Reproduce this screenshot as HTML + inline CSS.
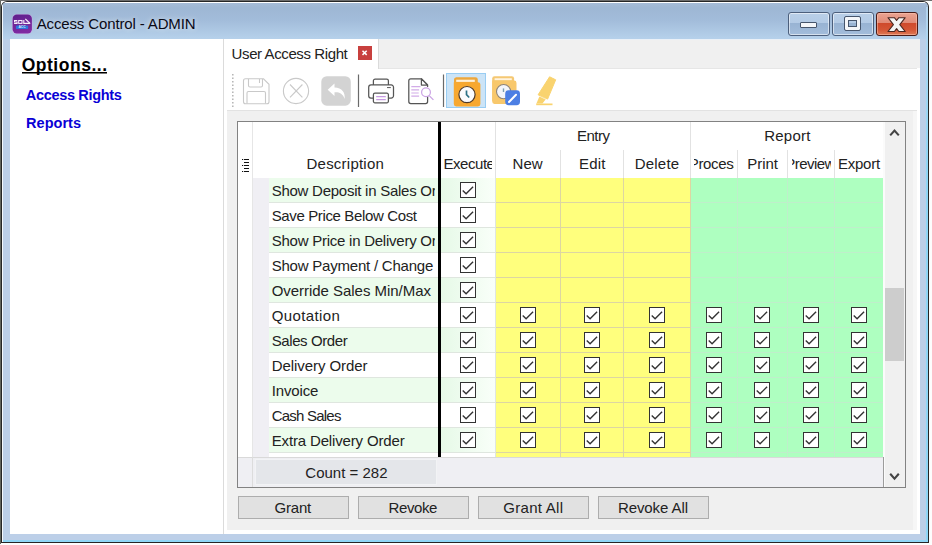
<!DOCTYPE html>
<html><head><meta charset="utf-8"><title>Access Control - ADMIN</title>
<style>
*{box-sizing:border-box;margin:0;padding:0}
html,body{width:932px;height:545px;overflow:hidden;background:#fdfdfd;font-family:"Liberation Sans",sans-serif;color:#1a1a1a}
.abs,.win *{position:absolute}
.win{position:absolute;left:0;top:0;width:932px;height:545px;overflow:hidden}
.s0{left:0;top:0;width:932px;height:1px;background:#6c6c6c}
.s1{left:0;top:1px;width:1px;height:543px;background:#62645c}
.bord{left:1px;top:1px;width:928px;height:542px;background:#262626;border-radius:6px 6px 0 0}
.frame{left:2px;top:2px;width:926px;height:540px;background:#bccfe8;border-radius:5px 5px 0 0;overflow:hidden}
.tb{left:0;top:0;right:0;height:37px;background:linear-gradient(#fff 0,#fff 1px,#a6bcd7 1px,#9eb7d4 6px,#a2bcda 18px,#b5d0ea 36px)}
.cy{left:1px;right:0;bottom:0;height:2px;background:#8fd6f6}
.cyr{right:0;top:5px;bottom:0;width:2px;background:linear-gradient(#b4d4ee,#a6d8f4 60px,#8fd6f6 160px)}
.wl{left:0;top:0;width:1px;bottom:0;background:#f4f8fc}
.title{left:36px;top:14px;font-size:15px;line-height:20px;color:#0a0a14;white-space:nowrap;letter-spacing:-0.11px}
.client{left:10px;top:39px;width:910px;height:495px;background:#fff}
.left{left:0;top:0;width:213px;height:495px;background:#fff}
.split{left:213px;top:0;width:1px;height:495px;background:#dbdbdb}
.opt{left:12px;top:15px;font-weight:bold;font-size:18px;line-height:22px;white-space:nowrap;color:#000;letter-spacing:-0.3px}
.opt i{left:0;right:0;top:18px;height:2px;background:#000}
.lnk{left:16px;font-weight:bold;font-size:14.5px;line-height:18px;color:#0a00d6;white-space:nowrap;letter-spacing:-0.3px}
.right{left:214px;top:0;width:696px;height:495px;background:#f0f0f0}
.rt{left:0;top:0;width:696px;height:1px;background:#eaf0f7}
.tab{left:0;top:0;width:155px;height:30px;background:#fff;border-right:1px solid #dadada;z-index:2}
.tab span{left:8px;top:5px;font-size:15px;line-height:20px;white-space:nowrap;letter-spacing:0;color:#1a1a1a}
.tabx{left:134px;top:7px;width:14px;height:14px;background:#c8403e}
.tool{left:0;top:29px;width:693px;height:42px;background:#fff;border-top:1px solid #e6e6e6}
.panel{left:3px;top:72px;width:690px;height:419px;background:#f0f0f0}
.pl{left:0;top:71px;width:693px;height:1px;background:#e2e2e2}
.rb0{right:3px;top:72px;width:4px;height:419px;background:#f6f6f6}
.rb1{right:0;top:29px;width:3px;height:466px;background:#fff}
.lb1{left:0;top:71px;width:3px;height:424px;background:#fff}
.bb1{left:214px;right:0;bottom:0;height:4px;background:#fff}
.grid{left:13px;top:82px;width:669px;height:367px;border:1px solid #828282;background:#fff;overflow:hidden}
.grid .c{border-right:0;}
.hdr{font-size:15px;line-height:20px;white-space:nowrap;overflow:hidden;text-align:center;letter-spacing:0;color:#1a1a1a}
.c.desc{overflow:hidden}
.c.desc span{left:3px;top:2px;font-size:15px;line-height:20px;white-space:nowrap;letter-spacing:0;color:#1a1a1a}
.c.ind{background:#f0eff4}
.cb{position:absolute}
.vl{width:1px;background:#e2e2e2}

.capb{border:1px solid #4c5f7c;border-radius:3px;background:linear-gradient(#b9cfe8 0,#b3cae5 46%,#98b3d3 47%,#a3bddb 100%);box-shadow:inset 0 0 0 1px rgba(255,255,255,.55)}
.capb b{background:#f4f6f9;border:1px solid #46556c;border-radius:1px}
.capb.red{border-color:#4a1c18;background:linear-gradient(#eaa392 0,#e08a76 46%,#cf4a2c 47%,#d45535 75%,#de7a55 100%);box-shadow:inset 0 0 0 1px rgba(255,200,180,.5)}
.ul{left:12px;top:33px;width:85px;height:2px;background:linear-gradient(#000 0,#000 50%,#777 50%,#777 100%)}
.clip{overflow:hidden;z-index:5}
.t{z-index:5}
.t{font-family:"Liberation Sans",sans-serif;white-space:nowrap;line-height:20px;font-size:15px;color:#222}
.tt{color:#0a0a16;text-shadow:0 0 5px rgba(255,255,255,.55),0 0 9px rgba(255,255,255,.35)}
.to{font-weight:bold;font-size:17.5px;color:#000}
.tl{font-weight:bold;font-size:14.5px;color:#0a00d6}

.btn{top:457px;width:111px;height:23px;background:#e1e1e1;border:1px solid #adadad;font-size:15px;line-height:21px;text-align:center;letter-spacing:0;color:#1a1a1a}
</style></head><body>
<div class="win">
 <div class="s0"></div><div class="s1"></div><div class="bord"></div>
 <div class="frame">
  <div class="tb"></div>
  <div class="wl"></div>
  <div class="cy"></div><div class="cyr"></div>
 </div>
 <!-- app icon -->
 <svg style="left:12px;top:14px" width="21" height="20" viewBox="0 0 21 20">
  <defs><linearGradient id="pg" x1="0" y1="0" x2="0.3" y2="1"><stop offset="0" stop-color="#5e1f8c"/><stop offset="1" stop-color="#7f2ba2"/></linearGradient></defs>
  <rect x="0.1" y="0.2" width="20.200" height="19.600" rx="4.600" fill="#d9b3ea" opacity="0.75"/>
  <rect x="0.600" y="0.600" width="19.300" height="18.800" rx="4.200" fill="url(#pg)"/>
  <path d="M5.300 6.500H2.500V7.900H5.100V9.400H2.100" fill="none" stroke="#f6eefb" stroke-width="1.050"/>
  <rect x="6.700" y="6.500" width="3.300" height="2.900" fill="none" stroke="#f6eefb" stroke-width="1.050"/>
  <path d="M11.800 6V9.400H17.800" fill="none" stroke="#f6eefb" stroke-width="1.100"/>
  <path d="M13.300 4.900L18.200 9.600" fill="none" stroke="#f6eefb" stroke-width="1.300"/>
  <rect x="3.900" y="11.400" width="12.300" height="3.700" rx="1.200" fill="#2f74da"/>
  <text x="10.050" y="14.350" font-size="3.300" font-weight="bold" text-anchor="middle" fill="#dfeaff" font-family="Liberation Sans, sans-serif">ACC</text>
 </svg>
 <!-- caption buttons -->
 <div class="capb" style="left:788px;top:12px;width:42px;height:24px"><i class="g1"></i><b style="left:11px;top:9px;width:17px;height:6px"></b></div>
 <div class="capb" style="left:832px;top:12px;width:42px;height:24px"><i class="g1"></i><b style="left:12px;top:4px;width:15px;height:13px;background:transparent;border:3px solid #f4f6f9;outline:1px solid #46556c;box-shadow:inset 0 0 0 1px #46556c"></b></div>
 <div class="capb red" style="left:876px;top:12px;width:42px;height:24px"><i class="g1"></i>
  <svg style="left:9px;top:3px" width="22" height="18" viewBox="0 0 22 18"><path d="M2.00 1.70 L8.40 1.70 L10.60 4.51 L12.80 1.70 L19.20 1.70 L13.80 8.60 L19.20 15.50 L12.80 15.50 L10.60 12.69 L8.40 15.50 L2.00 15.50 L7.40 8.60z" fill="#f4f4f4" stroke="#4a2620" stroke-width="1.1" stroke-linejoin="round"/></svg>
 </div>

 <div class="client">
  <div class="left">
   <div class="ul"></div>
  </div>
  <div class="split"></div>
  <div class="right">
   <div class="rt"></div><div class="tab">
    <div class="tabx"><svg style="left:0;top:0" width="14" height="14" viewBox="0 0 14 14"><path d="M4.500 4.700l4.200 4.200M8.700 4.700l-4.200 4.200" stroke="#fff" stroke-width="1.500"/></svg></div>
   </div>
   <div class="tool" id="tool"><svg style="left:0;top:0" width="693" height="41" viewBox="224 69 693 41">
 <!-- grip -->
 <path d="M232.800 74v34" stroke="#b4b4b4" stroke-width="1.500" stroke-dasharray="1.500 2"/>
 <!-- save (disabled) -->
 <g fill="none" stroke="#c9c9c9" stroke-width="1.1">
  <path d="M245.5 78.8h18l5.5 5.5v17.4a2 2 0 0 1-2 2h-21.5a2 2 0 0 1-2-2V80.8a2 2 0 0 1 2-2z"/>
  <path d="M248.5 79v6.5a1.5 1.5 0 0 0 1.500 1.500h11a1.500 1.500 0 0 0 1.500-1.500V79"/>
  <path d="M259.500 79v4"/>
  <path d="M247 103.500V93a1.500 1.500 0 0 1 1.500-1.500h15.500a1.500 1.500 0 0 1 1.500 1.500v10.500"/>
 </g>
 <!-- cancel (disabled) -->
 <g fill="none" stroke="#c9c9c9" stroke-width="1.1">
  <circle cx="296" cy="91" r="12.600"/>
  <path d="M290 84.500l12.400 12.800M302.400 84.500L290 97.300"/>
 </g>
 <!-- undo (disabled) -->
 <rect x="321.300" y="76.200" width="29.500" height="29.500" rx="5.500" fill="#d3d3d3"/>
 <path d="M334.500 83.500l-6.800 6.300 6.800 6.300v-3.900c4.800-0.300 8.300 1.300 10.200 6.800 0.600-6.800-2.600-11.200-10.200-11.600z" fill="#fff"/>
 <!-- separators -->
 <path d="M358.500 74.500v32.500M443.500 74.500v32.500" stroke="#6a6a6a" stroke-width="1.200"/>
 <!-- printer -->
 <g fill="none" stroke="#555" stroke-width="1.250" stroke-linejoin="round">
  <path d="M373.400 85v-4.200a1.700 1.700 0 0 1 1.700-1.700h11.600a1.700 1.700 0 0 1 1.700 1.700v4.200"/>
  <path d="M373.400 98h-2.400a2.300 2.300 0 0 1-2.300-2.300v-8.400a2.300 2.300 0 0 1 2.300-2.300h20.200a2.300 2.300 0 0 1 2.300 2.300v8.400a2.300 2.300 0 0 1-2.300 2.300h-2.400"/>
  <path d="M374.900 93.200h12a1.500 1.500 0 0 1 1.500 1.500v6.600a1.500 1.500 0 0 1-1.500 1.500h-12a1.500 1.500 0 0 1-1.500-1.500v-6.600a1.500 1.500 0 0 1 1.500-1.500z" fill="#fff"/>
  <path d="M387 87.600h3.800" stroke-width="1"/>
 </g>
 <path d="M376.200 96.600h9.600M376.200 99.600h9.600" stroke="#c79be2" stroke-width="1.100"/>
 <!-- doc preview -->
 <g fill="none" stroke="#555" stroke-width="1.250" stroke-linejoin="round">
  <path d="M427.600 96v5.600a2 2 0 0 1-2 2h-14.800a2 2 0 0 1-2-2v-20.800a2 2 0 0 1 2-2h10.600l6.200 6.200v2"/>
  <path d="M421.400 78.900v6.100h6.100z" fill="#fff"/>
 </g>
 <path d="M411.300 86.600h9.200M411.300 89.800h7.800M411.300 93h7.400M411.300 96.200h7.800" stroke="#d2abe8" stroke-width="1.200"/>
 <circle cx="426" cy="92.300" r="4.400" fill="#fff" stroke="#caa2e4" stroke-width="1.200"/>
 <path d="M429.200 95.600l4.200 4.300" stroke="#caa2e4" stroke-width="1.300"/>
 <!-- selected folder-clock -->
 <rect x="446.500" y="73.500" width="39" height="34" fill="#cce4f7" stroke="#99cdf3"/>
 <path d="M456.200 77.200h19.200a2.400 2.400 0 0 1 2.400 2.400V104h-23.800V79.600a2.400 2.400 0 0 1 2.200-2.400z" fill="#eda73c"/>
 <path d="M453.800 82.200h24.200a2.400 2.400 0 0 1 2.400 2.400v19.500a2.400 2.400 0 0 1-2.400 2.400h-21.800a2.400 2.400 0 0 1-2.400-2.400z" fill="#f7a830"/>
 <path d="M456.200 80.800h18.600" stroke="#fff1d9" stroke-width="2.200"/>
 <circle cx="467" cy="94.600" r="8.100" fill="#fbfbfd" stroke="#4e3a2a" stroke-width="1.200"/>
 <path d="M466.500 90.600v4.100l2.700 2.800" fill="none" stroke="#2d7186" stroke-width="1.700"/>
 <!-- folder-clock-edit -->
 <path d="M494.500 76.200h17.300a2.300 2.300 0 0 1 2.300 2.300V101h-21.900V78.500a2.300 2.300 0 0 1 2.300-2.300z" fill="#f5c873"/>
 <path d="M492.200 80.600h22a2.300 2.300 0 0 1 2.300 2.300v18.700a2.300 2.300 0 0 1-2.300 2.300h-19.700a2.300 2.300 0 0 1-2.300-2.300z" fill="#f8c86c"/>
 <path d="M494.600 79.200h17.200" stroke="#fff4e0" stroke-width="1.900"/>
 <circle cx="503.600" cy="91.600" r="7.100" fill="#f4f6fa" stroke="#8d8378" stroke-width="1.100"/>
 <path d="M503.500 88.400v3.600" fill="none" stroke="#7c9fb0" stroke-width="1.400"/>
 <rect x="505.200" y="90.300" width="14.800" height="14.900" rx="3.400" fill="#4c7fe4"/>
 <path d="M509 102l7-7.200" stroke="#fff" stroke-width="2" stroke-linecap="round"/>
 <!-- highlighter -->
 <g fill="#f9d36f">
  <path d="M549.600 76.800l6.100 3-8.100 19.300-9.500-4.300z" stroke="#f9d36f" stroke-width="1" stroke-linejoin="round"/>
  <path d="M539.400 96.500l6.200 3.100-3.200 3.900-6 0.100z"/>
  <rect x="536.200" y="103.500" width="16.300" height="1.700"/>
 </g>
 <path d="M540.300 96.600l5.600 2.700" stroke="#fbe2a0" stroke-width="0.700" fill="none"/>
</svg>
</div>
   <div class="pl"></div><div class="panel"></div><div class="lb1"></div>
   <div class="grid" id="grid">
<div style="left:0;top:0;width:14px;height:335px;background:#fff"></div>
<div class="vl" style="left:14px;top:0;height:335px;background:#e6e6e6"></div>
<svg style="left:4px;top:36px" width="8" height="15" viewBox="0 0 8 15"><path d="M2 1.500h5M2 4.500h5M2 7.500h5M2 10.500h5M2 13.500h5" stroke="#111" stroke-width="1.150"/><path d="M0 1.500h1.200M0 7.500h1.200M0 13.500h1.200" stroke="#111" stroke-width="1.200"/></svg>
<div class="vl" style="left:257px;top:0px;height:56px"></div>
<div class="vl" style="left:322px;top:28px;height:28px"></div>
<div class="vl" style="left:385px;top:28px;height:28px"></div>
<div class="vl" style="left:452px;top:0px;height:56px"></div>
<div class="vl" style="left:499px;top:28px;height:28px"></div>
<div class="vl" style="left:549px;top:28px;height:28px"></div>
<div class="vl" style="left:596px;top:28px;height:28px"></div>
<div class="c ind" style="left:15px;top:56px;width:16px;height:25px"></div>
<div class="c" style="left:31px;top:56px;width:169px;height:24px;background:#ecfcec"></div>
<div style="left:31px;top:80px;width:169px;height:1px;background:#dfe6df"></div>
<div class="c" style="left:203px;top:56px;width:55px;height:25px;background:linear-gradient(90deg,#e6f9e7,#f9fff9);border-right:1px solid #dfe6df;border-bottom:1px solid #dfe6df"></div>
<svg class="cb" style="left:222px;top:60px" width="16" height="16" viewBox="0 0 16 16"><rect x="0.5" y="0.5" width="15" height="15" fill="#fff" stroke="#333"/><path d="M2.7 8.4 L6.1 11.8 L13.1 4.8" fill="none" stroke="#333" stroke-width="1.35"/></svg>
<div class="c" style="left:258px;top:56px;width:65px;height:25px;background:#ffff7d;border-right:1px solid #ddd6a2;border-bottom:1px solid #ddd6a2"></div>
<div class="c" style="left:323px;top:56px;width:63px;height:25px;background:#ffff7d;border-right:1px solid #ddd6a2;border-bottom:1px solid #ddd6a2"></div>
<div class="c" style="left:386px;top:56px;width:67px;height:25px;background:#ffff7d;border-right:1px solid #ddd6a2;border-bottom:1px solid #ddd6a2"></div>
<div class="c" style="left:453px;top:56px;width:47px;height:25px;background:#aeffc0;border-right:1px solid #bfeecb;border-bottom:1px solid #bfeecb"></div>
<div class="c" style="left:500px;top:56px;width:50px;height:25px;background:#aeffc0;border-right:1px solid #bfeecb;border-bottom:1px solid #bfeecb"></div>
<div class="c" style="left:550px;top:56px;width:47px;height:25px;background:#aeffc0;border-right:1px solid #bfeecb;border-bottom:1px solid #bfeecb"></div>
<div class="c" style="left:597px;top:56px;width:49px;height:25px;background:#aeffc0;border-right:1px solid #bfeecb;border-bottom:1px solid #bfeecb"></div>
<div class="c ind" style="left:15px;top:81px;width:16px;height:25px"></div>
<div class="c" style="left:31px;top:81px;width:169px;height:24px;background:#ffffff"></div>
<div style="left:31px;top:105px;width:169px;height:1px;background:#dfe6df"></div>
<div class="c" style="left:203px;top:81px;width:55px;height:25px;background:#ffffff;border-right:1px solid #dfe6df;border-bottom:1px solid #dfe6df"></div>
<svg class="cb" style="left:222px;top:85px" width="16" height="16" viewBox="0 0 16 16"><rect x="0.5" y="0.5" width="15" height="15" fill="#fff" stroke="#333"/><path d="M2.7 8.4 L6.1 11.8 L13.1 4.8" fill="none" stroke="#333" stroke-width="1.35"/></svg>
<div class="c" style="left:258px;top:81px;width:65px;height:25px;background:#ffff7d;border-right:1px solid #ddd6a2;border-bottom:1px solid #ddd6a2"></div>
<div class="c" style="left:323px;top:81px;width:63px;height:25px;background:#ffff7d;border-right:1px solid #ddd6a2;border-bottom:1px solid #ddd6a2"></div>
<div class="c" style="left:386px;top:81px;width:67px;height:25px;background:#ffff7d;border-right:1px solid #ddd6a2;border-bottom:1px solid #ddd6a2"></div>
<div class="c" style="left:453px;top:81px;width:47px;height:25px;background:#aeffc0;border-right:1px solid #bfeecb;border-bottom:1px solid #bfeecb"></div>
<div class="c" style="left:500px;top:81px;width:50px;height:25px;background:#aeffc0;border-right:1px solid #bfeecb;border-bottom:1px solid #bfeecb"></div>
<div class="c" style="left:550px;top:81px;width:47px;height:25px;background:#aeffc0;border-right:1px solid #bfeecb;border-bottom:1px solid #bfeecb"></div>
<div class="c" style="left:597px;top:81px;width:49px;height:25px;background:#aeffc0;border-right:1px solid #bfeecb;border-bottom:1px solid #bfeecb"></div>
<div class="c ind" style="left:15px;top:106px;width:16px;height:25px"></div>
<div class="c" style="left:31px;top:106px;width:169px;height:24px;background:#ecfcec"></div>
<div style="left:31px;top:130px;width:169px;height:1px;background:#dfe6df"></div>
<div class="c" style="left:203px;top:106px;width:55px;height:25px;background:linear-gradient(90deg,#e6f9e7,#f9fff9);border-right:1px solid #dfe6df;border-bottom:1px solid #dfe6df"></div>
<svg class="cb" style="left:222px;top:110px" width="16" height="16" viewBox="0 0 16 16"><rect x="0.5" y="0.5" width="15" height="15" fill="#fff" stroke="#333"/><path d="M2.7 8.4 L6.1 11.8 L13.1 4.8" fill="none" stroke="#333" stroke-width="1.35"/></svg>
<div class="c" style="left:258px;top:106px;width:65px;height:25px;background:#ffff7d;border-right:1px solid #ddd6a2;border-bottom:1px solid #ddd6a2"></div>
<div class="c" style="left:323px;top:106px;width:63px;height:25px;background:#ffff7d;border-right:1px solid #ddd6a2;border-bottom:1px solid #ddd6a2"></div>
<div class="c" style="left:386px;top:106px;width:67px;height:25px;background:#ffff7d;border-right:1px solid #ddd6a2;border-bottom:1px solid #ddd6a2"></div>
<div class="c" style="left:453px;top:106px;width:47px;height:25px;background:#aeffc0;border-right:1px solid #bfeecb;border-bottom:1px solid #bfeecb"></div>
<div class="c" style="left:500px;top:106px;width:50px;height:25px;background:#aeffc0;border-right:1px solid #bfeecb;border-bottom:1px solid #bfeecb"></div>
<div class="c" style="left:550px;top:106px;width:47px;height:25px;background:#aeffc0;border-right:1px solid #bfeecb;border-bottom:1px solid #bfeecb"></div>
<div class="c" style="left:597px;top:106px;width:49px;height:25px;background:#aeffc0;border-right:1px solid #bfeecb;border-bottom:1px solid #bfeecb"></div>
<div class="c ind" style="left:15px;top:131px;width:16px;height:25px"></div>
<div class="c" style="left:31px;top:131px;width:169px;height:24px;background:#ffffff"></div>
<div style="left:31px;top:155px;width:169px;height:1px;background:#dfe6df"></div>
<div class="c" style="left:203px;top:131px;width:55px;height:25px;background:#ffffff;border-right:1px solid #dfe6df;border-bottom:1px solid #dfe6df"></div>
<svg class="cb" style="left:222px;top:135px" width="16" height="16" viewBox="0 0 16 16"><rect x="0.5" y="0.5" width="15" height="15" fill="#fff" stroke="#333"/><path d="M2.7 8.4 L6.1 11.8 L13.1 4.8" fill="none" stroke="#333" stroke-width="1.35"/></svg>
<div class="c" style="left:258px;top:131px;width:65px;height:25px;background:#ffff7d;border-right:1px solid #ddd6a2;border-bottom:1px solid #ddd6a2"></div>
<div class="c" style="left:323px;top:131px;width:63px;height:25px;background:#ffff7d;border-right:1px solid #ddd6a2;border-bottom:1px solid #ddd6a2"></div>
<div class="c" style="left:386px;top:131px;width:67px;height:25px;background:#ffff7d;border-right:1px solid #ddd6a2;border-bottom:1px solid #ddd6a2"></div>
<div class="c" style="left:453px;top:131px;width:47px;height:25px;background:#aeffc0;border-right:1px solid #bfeecb;border-bottom:1px solid #bfeecb"></div>
<div class="c" style="left:500px;top:131px;width:50px;height:25px;background:#aeffc0;border-right:1px solid #bfeecb;border-bottom:1px solid #bfeecb"></div>
<div class="c" style="left:550px;top:131px;width:47px;height:25px;background:#aeffc0;border-right:1px solid #bfeecb;border-bottom:1px solid #bfeecb"></div>
<div class="c" style="left:597px;top:131px;width:49px;height:25px;background:#aeffc0;border-right:1px solid #bfeecb;border-bottom:1px solid #bfeecb"></div>
<div class="c ind" style="left:15px;top:156px;width:16px;height:25px"></div>
<div class="c" style="left:31px;top:156px;width:169px;height:24px;background:#ecfcec"></div>
<div style="left:31px;top:180px;width:169px;height:1px;background:#dfe6df"></div>
<div class="c" style="left:203px;top:156px;width:55px;height:25px;background:linear-gradient(90deg,#e6f9e7,#f9fff9);border-right:1px solid #dfe6df;border-bottom:1px solid #dfe6df"></div>
<svg class="cb" style="left:222px;top:160px" width="16" height="16" viewBox="0 0 16 16"><rect x="0.5" y="0.5" width="15" height="15" fill="#fff" stroke="#333"/><path d="M2.7 8.4 L6.1 11.8 L13.1 4.8" fill="none" stroke="#333" stroke-width="1.35"/></svg>
<div class="c" style="left:258px;top:156px;width:65px;height:25px;background:#ffff7d;border-right:1px solid #ddd6a2;border-bottom:1px solid #ddd6a2"></div>
<div class="c" style="left:323px;top:156px;width:63px;height:25px;background:#ffff7d;border-right:1px solid #ddd6a2;border-bottom:1px solid #ddd6a2"></div>
<div class="c" style="left:386px;top:156px;width:67px;height:25px;background:#ffff7d;border-right:1px solid #ddd6a2;border-bottom:1px solid #ddd6a2"></div>
<div class="c" style="left:453px;top:156px;width:47px;height:25px;background:#aeffc0;border-right:1px solid #bfeecb;border-bottom:1px solid #bfeecb"></div>
<div class="c" style="left:500px;top:156px;width:50px;height:25px;background:#aeffc0;border-right:1px solid #bfeecb;border-bottom:1px solid #bfeecb"></div>
<div class="c" style="left:550px;top:156px;width:47px;height:25px;background:#aeffc0;border-right:1px solid #bfeecb;border-bottom:1px solid #bfeecb"></div>
<div class="c" style="left:597px;top:156px;width:49px;height:25px;background:#aeffc0;border-right:1px solid #bfeecb;border-bottom:1px solid #bfeecb"></div>
<div class="c ind" style="left:15px;top:181px;width:16px;height:25px"></div>
<div class="c" style="left:31px;top:181px;width:169px;height:24px;background:#ffffff"></div>
<div style="left:31px;top:205px;width:169px;height:1px;background:#dfe6df"></div>
<div class="c" style="left:203px;top:181px;width:55px;height:25px;background:#ffffff;border-right:1px solid #dfe6df;border-bottom:1px solid #dfe6df"></div>
<svg class="cb" style="left:222px;top:185px" width="16" height="16" viewBox="0 0 16 16"><rect x="0.5" y="0.5" width="15" height="15" fill="#fff" stroke="#333"/><path d="M2.7 8.4 L6.1 11.8 L13.1 4.8" fill="none" stroke="#333" stroke-width="1.35"/></svg>
<div class="c" style="left:258px;top:181px;width:65px;height:25px;background:#ffff7d;border-right:1px solid #ddd6a2;border-bottom:1px solid #ddd6a2"></div>
<svg class="cb" style="left:282px;top:185px" width="16" height="16" viewBox="0 0 16 16"><rect x="0.5" y="0.5" width="15" height="15" fill="#fff" stroke="#333"/><path d="M2.7 8.4 L6.1 11.8 L13.1 4.8" fill="none" stroke="#333" stroke-width="1.35"/></svg>
<div class="c" style="left:323px;top:181px;width:63px;height:25px;background:#ffff7d;border-right:1px solid #ddd6a2;border-bottom:1px solid #ddd6a2"></div>
<svg class="cb" style="left:346px;top:185px" width="16" height="16" viewBox="0 0 16 16"><rect x="0.5" y="0.5" width="15" height="15" fill="#fff" stroke="#333"/><path d="M2.7 8.4 L6.1 11.8 L13.1 4.8" fill="none" stroke="#333" stroke-width="1.35"/></svg>
<div class="c" style="left:386px;top:181px;width:67px;height:25px;background:#ffff7d;border-right:1px solid #ddd6a2;border-bottom:1px solid #ddd6a2"></div>
<svg class="cb" style="left:411px;top:185px" width="16" height="16" viewBox="0 0 16 16"><rect x="0.5" y="0.5" width="15" height="15" fill="#fff" stroke="#333"/><path d="M2.7 8.4 L6.1 11.8 L13.1 4.8" fill="none" stroke="#333" stroke-width="1.35"/></svg>
<div class="c" style="left:453px;top:181px;width:47px;height:25px;background:#aeffc0;border-right:1px solid #bfeecb;border-bottom:1px solid #bfeecb"></div>
<svg class="cb" style="left:468px;top:185px" width="16" height="16" viewBox="0 0 16 16"><rect x="0.5" y="0.5" width="15" height="15" fill="#fff" stroke="#333"/><path d="M2.7 8.4 L6.1 11.8 L13.1 4.8" fill="none" stroke="#333" stroke-width="1.35"/></svg>
<div class="c" style="left:500px;top:181px;width:50px;height:25px;background:#aeffc0;border-right:1px solid #bfeecb;border-bottom:1px solid #bfeecb"></div>
<svg class="cb" style="left:516px;top:185px" width="16" height="16" viewBox="0 0 16 16"><rect x="0.5" y="0.5" width="15" height="15" fill="#fff" stroke="#333"/><path d="M2.7 8.4 L6.1 11.8 L13.1 4.8" fill="none" stroke="#333" stroke-width="1.35"/></svg>
<div class="c" style="left:550px;top:181px;width:47px;height:25px;background:#aeffc0;border-right:1px solid #bfeecb;border-bottom:1px solid #bfeecb"></div>
<svg class="cb" style="left:565px;top:185px" width="16" height="16" viewBox="0 0 16 16"><rect x="0.5" y="0.5" width="15" height="15" fill="#fff" stroke="#333"/><path d="M2.7 8.4 L6.1 11.8 L13.1 4.8" fill="none" stroke="#333" stroke-width="1.35"/></svg>
<div class="c" style="left:597px;top:181px;width:49px;height:25px;background:#aeffc0;border-right:1px solid #bfeecb;border-bottom:1px solid #bfeecb"></div>
<svg class="cb" style="left:613px;top:185px" width="16" height="16" viewBox="0 0 16 16"><rect x="0.5" y="0.5" width="15" height="15" fill="#fff" stroke="#333"/><path d="M2.7 8.4 L6.1 11.8 L13.1 4.8" fill="none" stroke="#333" stroke-width="1.35"/></svg>
<div class="c ind" style="left:15px;top:206px;width:16px;height:25px"></div>
<div class="c" style="left:31px;top:206px;width:169px;height:24px;background:#ecfcec"></div>
<div style="left:31px;top:230px;width:169px;height:1px;background:#dfe6df"></div>
<div class="c" style="left:203px;top:206px;width:55px;height:25px;background:linear-gradient(90deg,#e6f9e7,#f9fff9);border-right:1px solid #dfe6df;border-bottom:1px solid #dfe6df"></div>
<svg class="cb" style="left:222px;top:210px" width="16" height="16" viewBox="0 0 16 16"><rect x="0.5" y="0.5" width="15" height="15" fill="#fff" stroke="#333"/><path d="M2.7 8.4 L6.1 11.8 L13.1 4.8" fill="none" stroke="#333" stroke-width="1.35"/></svg>
<div class="c" style="left:258px;top:206px;width:65px;height:25px;background:#ffff7d;border-right:1px solid #ddd6a2;border-bottom:1px solid #ddd6a2"></div>
<svg class="cb" style="left:282px;top:210px" width="16" height="16" viewBox="0 0 16 16"><rect x="0.5" y="0.5" width="15" height="15" fill="#fff" stroke="#333"/><path d="M2.7 8.4 L6.1 11.8 L13.1 4.8" fill="none" stroke="#333" stroke-width="1.35"/></svg>
<div class="c" style="left:323px;top:206px;width:63px;height:25px;background:#ffff7d;border-right:1px solid #ddd6a2;border-bottom:1px solid #ddd6a2"></div>
<svg class="cb" style="left:346px;top:210px" width="16" height="16" viewBox="0 0 16 16"><rect x="0.5" y="0.5" width="15" height="15" fill="#fff" stroke="#333"/><path d="M2.7 8.4 L6.1 11.8 L13.1 4.8" fill="none" stroke="#333" stroke-width="1.35"/></svg>
<div class="c" style="left:386px;top:206px;width:67px;height:25px;background:#ffff7d;border-right:1px solid #ddd6a2;border-bottom:1px solid #ddd6a2"></div>
<svg class="cb" style="left:411px;top:210px" width="16" height="16" viewBox="0 0 16 16"><rect x="0.5" y="0.5" width="15" height="15" fill="#fff" stroke="#333"/><path d="M2.7 8.4 L6.1 11.8 L13.1 4.8" fill="none" stroke="#333" stroke-width="1.35"/></svg>
<div class="c" style="left:453px;top:206px;width:47px;height:25px;background:#aeffc0;border-right:1px solid #bfeecb;border-bottom:1px solid #bfeecb"></div>
<svg class="cb" style="left:468px;top:210px" width="16" height="16" viewBox="0 0 16 16"><rect x="0.5" y="0.5" width="15" height="15" fill="#fff" stroke="#333"/><path d="M2.7 8.4 L6.1 11.8 L13.1 4.8" fill="none" stroke="#333" stroke-width="1.35"/></svg>
<div class="c" style="left:500px;top:206px;width:50px;height:25px;background:#aeffc0;border-right:1px solid #bfeecb;border-bottom:1px solid #bfeecb"></div>
<svg class="cb" style="left:516px;top:210px" width="16" height="16" viewBox="0 0 16 16"><rect x="0.5" y="0.5" width="15" height="15" fill="#fff" stroke="#333"/><path d="M2.7 8.4 L6.1 11.8 L13.1 4.8" fill="none" stroke="#333" stroke-width="1.35"/></svg>
<div class="c" style="left:550px;top:206px;width:47px;height:25px;background:#aeffc0;border-right:1px solid #bfeecb;border-bottom:1px solid #bfeecb"></div>
<svg class="cb" style="left:565px;top:210px" width="16" height="16" viewBox="0 0 16 16"><rect x="0.5" y="0.5" width="15" height="15" fill="#fff" stroke="#333"/><path d="M2.7 8.4 L6.1 11.8 L13.1 4.8" fill="none" stroke="#333" stroke-width="1.35"/></svg>
<div class="c" style="left:597px;top:206px;width:49px;height:25px;background:#aeffc0;border-right:1px solid #bfeecb;border-bottom:1px solid #bfeecb"></div>
<svg class="cb" style="left:613px;top:210px" width="16" height="16" viewBox="0 0 16 16"><rect x="0.5" y="0.5" width="15" height="15" fill="#fff" stroke="#333"/><path d="M2.7 8.4 L6.1 11.8 L13.1 4.8" fill="none" stroke="#333" stroke-width="1.35"/></svg>
<div class="c ind" style="left:15px;top:231px;width:16px;height:25px"></div>
<div class="c" style="left:31px;top:231px;width:169px;height:24px;background:#ffffff"></div>
<div style="left:31px;top:255px;width:169px;height:1px;background:#dfe6df"></div>
<div class="c" style="left:203px;top:231px;width:55px;height:25px;background:#ffffff;border-right:1px solid #dfe6df;border-bottom:1px solid #dfe6df"></div>
<svg class="cb" style="left:222px;top:235px" width="16" height="16" viewBox="0 0 16 16"><rect x="0.5" y="0.5" width="15" height="15" fill="#fff" stroke="#333"/><path d="M2.7 8.4 L6.1 11.8 L13.1 4.8" fill="none" stroke="#333" stroke-width="1.35"/></svg>
<div class="c" style="left:258px;top:231px;width:65px;height:25px;background:#ffff7d;border-right:1px solid #ddd6a2;border-bottom:1px solid #ddd6a2"></div>
<svg class="cb" style="left:282px;top:235px" width="16" height="16" viewBox="0 0 16 16"><rect x="0.5" y="0.5" width="15" height="15" fill="#fff" stroke="#333"/><path d="M2.7 8.4 L6.1 11.8 L13.1 4.8" fill="none" stroke="#333" stroke-width="1.35"/></svg>
<div class="c" style="left:323px;top:231px;width:63px;height:25px;background:#ffff7d;border-right:1px solid #ddd6a2;border-bottom:1px solid #ddd6a2"></div>
<svg class="cb" style="left:346px;top:235px" width="16" height="16" viewBox="0 0 16 16"><rect x="0.5" y="0.5" width="15" height="15" fill="#fff" stroke="#333"/><path d="M2.7 8.4 L6.1 11.8 L13.1 4.8" fill="none" stroke="#333" stroke-width="1.35"/></svg>
<div class="c" style="left:386px;top:231px;width:67px;height:25px;background:#ffff7d;border-right:1px solid #ddd6a2;border-bottom:1px solid #ddd6a2"></div>
<svg class="cb" style="left:411px;top:235px" width="16" height="16" viewBox="0 0 16 16"><rect x="0.5" y="0.5" width="15" height="15" fill="#fff" stroke="#333"/><path d="M2.7 8.4 L6.1 11.8 L13.1 4.8" fill="none" stroke="#333" stroke-width="1.35"/></svg>
<div class="c" style="left:453px;top:231px;width:47px;height:25px;background:#aeffc0;border-right:1px solid #bfeecb;border-bottom:1px solid #bfeecb"></div>
<svg class="cb" style="left:468px;top:235px" width="16" height="16" viewBox="0 0 16 16"><rect x="0.5" y="0.5" width="15" height="15" fill="#fff" stroke="#333"/><path d="M2.7 8.4 L6.1 11.8 L13.1 4.8" fill="none" stroke="#333" stroke-width="1.35"/></svg>
<div class="c" style="left:500px;top:231px;width:50px;height:25px;background:#aeffc0;border-right:1px solid #bfeecb;border-bottom:1px solid #bfeecb"></div>
<svg class="cb" style="left:516px;top:235px" width="16" height="16" viewBox="0 0 16 16"><rect x="0.5" y="0.5" width="15" height="15" fill="#fff" stroke="#333"/><path d="M2.7 8.4 L6.1 11.8 L13.1 4.8" fill="none" stroke="#333" stroke-width="1.35"/></svg>
<div class="c" style="left:550px;top:231px;width:47px;height:25px;background:#aeffc0;border-right:1px solid #bfeecb;border-bottom:1px solid #bfeecb"></div>
<svg class="cb" style="left:565px;top:235px" width="16" height="16" viewBox="0 0 16 16"><rect x="0.5" y="0.5" width="15" height="15" fill="#fff" stroke="#333"/><path d="M2.7 8.4 L6.1 11.8 L13.1 4.8" fill="none" stroke="#333" stroke-width="1.35"/></svg>
<div class="c" style="left:597px;top:231px;width:49px;height:25px;background:#aeffc0;border-right:1px solid #bfeecb;border-bottom:1px solid #bfeecb"></div>
<svg class="cb" style="left:613px;top:235px" width="16" height="16" viewBox="0 0 16 16"><rect x="0.5" y="0.5" width="15" height="15" fill="#fff" stroke="#333"/><path d="M2.7 8.4 L6.1 11.8 L13.1 4.8" fill="none" stroke="#333" stroke-width="1.35"/></svg>
<div class="c ind" style="left:15px;top:256px;width:16px;height:25px"></div>
<div class="c" style="left:31px;top:256px;width:169px;height:24px;background:#ecfcec"></div>
<div style="left:31px;top:280px;width:169px;height:1px;background:#dfe6df"></div>
<div class="c" style="left:203px;top:256px;width:55px;height:25px;background:linear-gradient(90deg,#e6f9e7,#f9fff9);border-right:1px solid #dfe6df;border-bottom:1px solid #dfe6df"></div>
<svg class="cb" style="left:222px;top:260px" width="16" height="16" viewBox="0 0 16 16"><rect x="0.5" y="0.5" width="15" height="15" fill="#fff" stroke="#333"/><path d="M2.7 8.4 L6.1 11.8 L13.1 4.8" fill="none" stroke="#333" stroke-width="1.35"/></svg>
<div class="c" style="left:258px;top:256px;width:65px;height:25px;background:#ffff7d;border-right:1px solid #ddd6a2;border-bottom:1px solid #ddd6a2"></div>
<svg class="cb" style="left:282px;top:260px" width="16" height="16" viewBox="0 0 16 16"><rect x="0.5" y="0.5" width="15" height="15" fill="#fff" stroke="#333"/><path d="M2.7 8.4 L6.1 11.8 L13.1 4.8" fill="none" stroke="#333" stroke-width="1.35"/></svg>
<div class="c" style="left:323px;top:256px;width:63px;height:25px;background:#ffff7d;border-right:1px solid #ddd6a2;border-bottom:1px solid #ddd6a2"></div>
<svg class="cb" style="left:346px;top:260px" width="16" height="16" viewBox="0 0 16 16"><rect x="0.5" y="0.5" width="15" height="15" fill="#fff" stroke="#333"/><path d="M2.7 8.4 L6.1 11.8 L13.1 4.8" fill="none" stroke="#333" stroke-width="1.35"/></svg>
<div class="c" style="left:386px;top:256px;width:67px;height:25px;background:#ffff7d;border-right:1px solid #ddd6a2;border-bottom:1px solid #ddd6a2"></div>
<svg class="cb" style="left:411px;top:260px" width="16" height="16" viewBox="0 0 16 16"><rect x="0.5" y="0.5" width="15" height="15" fill="#fff" stroke="#333"/><path d="M2.7 8.4 L6.1 11.8 L13.1 4.8" fill="none" stroke="#333" stroke-width="1.35"/></svg>
<div class="c" style="left:453px;top:256px;width:47px;height:25px;background:#aeffc0;border-right:1px solid #bfeecb;border-bottom:1px solid #bfeecb"></div>
<svg class="cb" style="left:468px;top:260px" width="16" height="16" viewBox="0 0 16 16"><rect x="0.5" y="0.5" width="15" height="15" fill="#fff" stroke="#333"/><path d="M2.7 8.4 L6.1 11.8 L13.1 4.8" fill="none" stroke="#333" stroke-width="1.35"/></svg>
<div class="c" style="left:500px;top:256px;width:50px;height:25px;background:#aeffc0;border-right:1px solid #bfeecb;border-bottom:1px solid #bfeecb"></div>
<svg class="cb" style="left:516px;top:260px" width="16" height="16" viewBox="0 0 16 16"><rect x="0.5" y="0.5" width="15" height="15" fill="#fff" stroke="#333"/><path d="M2.7 8.4 L6.1 11.8 L13.1 4.8" fill="none" stroke="#333" stroke-width="1.35"/></svg>
<div class="c" style="left:550px;top:256px;width:47px;height:25px;background:#aeffc0;border-right:1px solid #bfeecb;border-bottom:1px solid #bfeecb"></div>
<svg class="cb" style="left:565px;top:260px" width="16" height="16" viewBox="0 0 16 16"><rect x="0.5" y="0.5" width="15" height="15" fill="#fff" stroke="#333"/><path d="M2.7 8.4 L6.1 11.8 L13.1 4.8" fill="none" stroke="#333" stroke-width="1.35"/></svg>
<div class="c" style="left:597px;top:256px;width:49px;height:25px;background:#aeffc0;border-right:1px solid #bfeecb;border-bottom:1px solid #bfeecb"></div>
<svg class="cb" style="left:613px;top:260px" width="16" height="16" viewBox="0 0 16 16"><rect x="0.5" y="0.5" width="15" height="15" fill="#fff" stroke="#333"/><path d="M2.7 8.4 L6.1 11.8 L13.1 4.8" fill="none" stroke="#333" stroke-width="1.35"/></svg>
<div class="c ind" style="left:15px;top:281px;width:16px;height:25px"></div>
<div class="c" style="left:31px;top:281px;width:169px;height:24px;background:#ffffff"></div>
<div style="left:31px;top:305px;width:169px;height:1px;background:#dfe6df"></div>
<div class="c" style="left:203px;top:281px;width:55px;height:25px;background:#ffffff;border-right:1px solid #dfe6df;border-bottom:1px solid #dfe6df"></div>
<svg class="cb" style="left:222px;top:285px" width="16" height="16" viewBox="0 0 16 16"><rect x="0.5" y="0.5" width="15" height="15" fill="#fff" stroke="#333"/><path d="M2.7 8.4 L6.1 11.8 L13.1 4.8" fill="none" stroke="#333" stroke-width="1.35"/></svg>
<div class="c" style="left:258px;top:281px;width:65px;height:25px;background:#ffff7d;border-right:1px solid #ddd6a2;border-bottom:1px solid #ddd6a2"></div>
<svg class="cb" style="left:282px;top:285px" width="16" height="16" viewBox="0 0 16 16"><rect x="0.5" y="0.5" width="15" height="15" fill="#fff" stroke="#333"/><path d="M2.7 8.4 L6.1 11.8 L13.1 4.8" fill="none" stroke="#333" stroke-width="1.35"/></svg>
<div class="c" style="left:323px;top:281px;width:63px;height:25px;background:#ffff7d;border-right:1px solid #ddd6a2;border-bottom:1px solid #ddd6a2"></div>
<svg class="cb" style="left:346px;top:285px" width="16" height="16" viewBox="0 0 16 16"><rect x="0.5" y="0.5" width="15" height="15" fill="#fff" stroke="#333"/><path d="M2.7 8.4 L6.1 11.8 L13.1 4.8" fill="none" stroke="#333" stroke-width="1.35"/></svg>
<div class="c" style="left:386px;top:281px;width:67px;height:25px;background:#ffff7d;border-right:1px solid #ddd6a2;border-bottom:1px solid #ddd6a2"></div>
<svg class="cb" style="left:411px;top:285px" width="16" height="16" viewBox="0 0 16 16"><rect x="0.5" y="0.5" width="15" height="15" fill="#fff" stroke="#333"/><path d="M2.7 8.4 L6.1 11.8 L13.1 4.8" fill="none" stroke="#333" stroke-width="1.35"/></svg>
<div class="c" style="left:453px;top:281px;width:47px;height:25px;background:#aeffc0;border-right:1px solid #bfeecb;border-bottom:1px solid #bfeecb"></div>
<svg class="cb" style="left:468px;top:285px" width="16" height="16" viewBox="0 0 16 16"><rect x="0.5" y="0.5" width="15" height="15" fill="#fff" stroke="#333"/><path d="M2.7 8.4 L6.1 11.8 L13.1 4.8" fill="none" stroke="#333" stroke-width="1.35"/></svg>
<div class="c" style="left:500px;top:281px;width:50px;height:25px;background:#aeffc0;border-right:1px solid #bfeecb;border-bottom:1px solid #bfeecb"></div>
<svg class="cb" style="left:516px;top:285px" width="16" height="16" viewBox="0 0 16 16"><rect x="0.5" y="0.5" width="15" height="15" fill="#fff" stroke="#333"/><path d="M2.7 8.4 L6.1 11.8 L13.1 4.8" fill="none" stroke="#333" stroke-width="1.35"/></svg>
<div class="c" style="left:550px;top:281px;width:47px;height:25px;background:#aeffc0;border-right:1px solid #bfeecb;border-bottom:1px solid #bfeecb"></div>
<svg class="cb" style="left:565px;top:285px" width="16" height="16" viewBox="0 0 16 16"><rect x="0.5" y="0.5" width="15" height="15" fill="#fff" stroke="#333"/><path d="M2.7 8.4 L6.1 11.8 L13.1 4.8" fill="none" stroke="#333" stroke-width="1.35"/></svg>
<div class="c" style="left:597px;top:281px;width:49px;height:25px;background:#aeffc0;border-right:1px solid #bfeecb;border-bottom:1px solid #bfeecb"></div>
<svg class="cb" style="left:613px;top:285px" width="16" height="16" viewBox="0 0 16 16"><rect x="0.5" y="0.5" width="15" height="15" fill="#fff" stroke="#333"/><path d="M2.7 8.4 L6.1 11.8 L13.1 4.8" fill="none" stroke="#333" stroke-width="1.35"/></svg>
<div class="c ind" style="left:15px;top:306px;width:16px;height:25px"></div>
<div class="c" style="left:31px;top:306px;width:169px;height:24px;background:#ecfcec"></div>
<div style="left:31px;top:330px;width:169px;height:1px;background:#dfe6df"></div>
<div class="c" style="left:203px;top:306px;width:55px;height:25px;background:linear-gradient(90deg,#e6f9e7,#f9fff9);border-right:1px solid #dfe6df;border-bottom:1px solid #dfe6df"></div>
<svg class="cb" style="left:222px;top:310px" width="16" height="16" viewBox="0 0 16 16"><rect x="0.5" y="0.5" width="15" height="15" fill="#fff" stroke="#333"/><path d="M2.7 8.4 L6.1 11.8 L13.1 4.8" fill="none" stroke="#333" stroke-width="1.35"/></svg>
<div class="c" style="left:258px;top:306px;width:65px;height:25px;background:#ffff7d;border-right:1px solid #ddd6a2;border-bottom:1px solid #ddd6a2"></div>
<svg class="cb" style="left:282px;top:310px" width="16" height="16" viewBox="0 0 16 16"><rect x="0.5" y="0.5" width="15" height="15" fill="#fff" stroke="#333"/><path d="M2.7 8.4 L6.1 11.8 L13.1 4.8" fill="none" stroke="#333" stroke-width="1.35"/></svg>
<div class="c" style="left:323px;top:306px;width:63px;height:25px;background:#ffff7d;border-right:1px solid #ddd6a2;border-bottom:1px solid #ddd6a2"></div>
<svg class="cb" style="left:346px;top:310px" width="16" height="16" viewBox="0 0 16 16"><rect x="0.5" y="0.5" width="15" height="15" fill="#fff" stroke="#333"/><path d="M2.7 8.4 L6.1 11.8 L13.1 4.8" fill="none" stroke="#333" stroke-width="1.35"/></svg>
<div class="c" style="left:386px;top:306px;width:67px;height:25px;background:#ffff7d;border-right:1px solid #ddd6a2;border-bottom:1px solid #ddd6a2"></div>
<svg class="cb" style="left:411px;top:310px" width="16" height="16" viewBox="0 0 16 16"><rect x="0.5" y="0.5" width="15" height="15" fill="#fff" stroke="#333"/><path d="M2.7 8.4 L6.1 11.8 L13.1 4.8" fill="none" stroke="#333" stroke-width="1.35"/></svg>
<div class="c" style="left:453px;top:306px;width:47px;height:25px;background:#aeffc0;border-right:1px solid #bfeecb;border-bottom:1px solid #bfeecb"></div>
<svg class="cb" style="left:468px;top:310px" width="16" height="16" viewBox="0 0 16 16"><rect x="0.5" y="0.5" width="15" height="15" fill="#fff" stroke="#333"/><path d="M2.7 8.4 L6.1 11.8 L13.1 4.8" fill="none" stroke="#333" stroke-width="1.35"/></svg>
<div class="c" style="left:500px;top:306px;width:50px;height:25px;background:#aeffc0;border-right:1px solid #bfeecb;border-bottom:1px solid #bfeecb"></div>
<svg class="cb" style="left:516px;top:310px" width="16" height="16" viewBox="0 0 16 16"><rect x="0.5" y="0.5" width="15" height="15" fill="#fff" stroke="#333"/><path d="M2.7 8.4 L6.1 11.8 L13.1 4.8" fill="none" stroke="#333" stroke-width="1.35"/></svg>
<div class="c" style="left:550px;top:306px;width:47px;height:25px;background:#aeffc0;border-right:1px solid #bfeecb;border-bottom:1px solid #bfeecb"></div>
<svg class="cb" style="left:565px;top:310px" width="16" height="16" viewBox="0 0 16 16"><rect x="0.5" y="0.5" width="15" height="15" fill="#fff" stroke="#333"/><path d="M2.7 8.4 L6.1 11.8 L13.1 4.8" fill="none" stroke="#333" stroke-width="1.35"/></svg>
<div class="c" style="left:597px;top:306px;width:49px;height:25px;background:#aeffc0;border-right:1px solid #bfeecb;border-bottom:1px solid #bfeecb"></div>
<svg class="cb" style="left:613px;top:310px" width="16" height="16" viewBox="0 0 16 16"><rect x="0.5" y="0.5" width="15" height="15" fill="#fff" stroke="#333"/><path d="M2.7 8.4 L6.1 11.8 L13.1 4.8" fill="none" stroke="#333" stroke-width="1.35"/></svg>
<div class="c ind" style="left:15px;top:331px;width:16px;height:25px"></div>
<div class="c" style="left:31px;top:331px;width:169px;height:24px;background:#ffffff"></div>
<div style="left:31px;top:355px;width:169px;height:1px;background:#dfe6df"></div>
<div class="c" style="left:203px;top:331px;width:55px;height:25px;background:#ffffff;border-right:1px solid #dfe6df;border-bottom:1px solid #dfe6df"></div>
<div class="c" style="left:258px;top:331px;width:65px;height:25px;background:#ffff7d;border-right:1px solid #ddd6a2;border-bottom:1px solid #ddd6a2"></div>
<div class="c" style="left:323px;top:331px;width:63px;height:25px;background:#ffff7d;border-right:1px solid #ddd6a2;border-bottom:1px solid #ddd6a2"></div>
<div class="c" style="left:386px;top:331px;width:67px;height:25px;background:#ffff7d;border-right:1px solid #ddd6a2;border-bottom:1px solid #ddd6a2"></div>
<div class="c" style="left:453px;top:331px;width:47px;height:25px;background:#aeffc0;border-right:1px solid #bfeecb;border-bottom:1px solid #bfeecb"></div>
<div class="c" style="left:500px;top:331px;width:50px;height:25px;background:#aeffc0;border-right:1px solid #bfeecb;border-bottom:1px solid #bfeecb"></div>
<div class="c" style="left:550px;top:331px;width:47px;height:25px;background:#aeffc0;border-right:1px solid #bfeecb;border-bottom:1px solid #bfeecb"></div>
<div class="c" style="left:597px;top:331px;width:49px;height:25px;background:#aeffc0;border-right:1px solid #bfeecb;border-bottom:1px solid #bfeecb"></div>
<div style="left:200px;top:0;width:3px;height:335px;background:#000"></div>
<div style="left:0;top:335px;width:645px;height:30px;background:#efeff3;border-top:1px solid #d9d9d9"></div>
<div class="vl" style="left:14px;top:335px;height:30px;background:#dcdcdc"></div>
<div style="left:17px;top:337px;width:182px;height:26px;background:#e4e6ea;border:1px solid #f2f3f5"></div>
<div style="left:645px;top:0;width:22px;height:365px;background:linear-gradient(90deg,#fbfbfb 0,#fbfbfb 2px,#f0f0f0 2px)"></div>
<div style="left:647px;top:166px;width:19px;height:73px;background:#cdcdcd"></div>
<div class="vl" style="left:645px;top:335px;height:30px;background:#9c9c9c"></div>
<svg style="left:650px;top:5px" width="14" height="11" viewBox="888 127 14 11"><path d="M890.200 135.400L894.500 130.600l4.300 4.800" fill="none" stroke="#444" stroke-width="2.100"/></svg>
<svg style="left:650px;top:349px" width="14" height="11" viewBox="888 471 14 11"><path d="M890.200 473.800L894.500 478.600l4.300-4.800" fill="none" stroke="#444" stroke-width="2.100"/></svg>
   </div>
   <div class="btn" style="left:14px"></div>
   <div class="btn" style="left:134px"></div>
   <div class="btn" style="left:254px"></div>
   <div class="btn" style="left:374px"></div>
   <div class="rb0"></div><div class="rb1"></div>
  </div>
  <div class="bb1"></div>
 </div>
<span class="t tt" style="left:36.70px;top:14px;letter-spacing:-0.133px">Access Control - ADMIN</span>
<span class="t tx" style="left:231.60px;top:44px;letter-spacing:-0.4px">User Access Right</span>
<span class="t to" style="left:21.65px;top:55px;letter-spacing:0.528px">Options...</span>
<span class="t tl" style="left:25.80px;top:85px;letter-spacing:-0.325px">Access Rights</span>
<span class="t tl" style="left:26.10px;top:113px;letter-spacing:0.017px">Reports</span>
<span class="t tx" style="left:306.50px;top:154px;letter-spacing:0.23px">Description</span>
<span class="t tx" style="left:576.90px;top:126px;letter-spacing:-0.5px">Entry</span>
<span class="t tx" style="left:764.30px;top:126px;letter-spacing:0.2px">Report</span>
<div class="clip" style="left:441px;top:150px;width:51px;height:28px"><span class="t tx" style="left:2.40px;top:4px;letter-spacing:-0.44px">Execute</span></div>
<span class="t tx" style="left:512.60px;top:154px;letter-spacing:0.0px">New</span>
<span class="t tx" style="left:579.00px;top:154px;letter-spacing:0.2px">Edit</span>
<span class="t tx" style="left:634.70px;top:154px;letter-spacing:0.22px">Delete</span>
<div class="clip" style="left:694px;top:150px;width:40px;height:28px"><span class="t tx" style="left:-5.20px;top:4px;letter-spacing:-0.36px">Process</span></div>
<span class="t tx" style="left:747.30px;top:154px;letter-spacing:-0.075px">Print</span>
<div class="clip" style="left:792px;top:150px;width:39px;height:28px"><span class="t tx" style="left:-6.80px;top:4px;letter-spacing:-0.52px">Preview</span></div>
<span class="t tx" style="left:837.90px;top:154px;letter-spacing:-0.22px">Export</span>
<div class="clip" style="left:269px;top:178px;width:166px;height:25px"><span class="t tx" style="left:2.70px;top:3px;letter-spacing:-0.255px">Show Deposit in Sales Order</span></div>
<div class="clip" style="left:269px;top:203px;width:167px;height:25px"><span class="t tx" style="left:2.70px;top:3px;letter-spacing:-0.365px">Save Price Below Cost</span></div>
<div class="clip" style="left:269px;top:228px;width:166px;height:25px"><span class="t tx" style="left:2.70px;top:3px;letter-spacing:-0.243px">Show Price in Delivery Order</span></div>
<div class="clip" style="left:269px;top:253px;width:167px;height:25px"><span class="t tx" style="left:2.70px;top:3px;letter-spacing:-0.215px">Show Payment / Change</span></div>
<div class="clip" style="left:269px;top:278px;width:167px;height:25px"><span class="t tx" style="left:2.70px;top:3px;letter-spacing:-0.038px">Override Sales Min/Max</span></div>
<span class="t tx" style="left:271.70px;top:306px;letter-spacing:0.387px">Quotation</span>
<span class="t tx" style="left:271.70px;top:331px;letter-spacing:-0.4px">Sales Order</span>
<span class="t tx" style="left:271.70px;top:356px;letter-spacing:-0.069px">Delivery Order</span>
<span class="t tx" style="left:271.70px;top:381px;letter-spacing:-0.133px">Invoice</span>
<span class="t tx" style="left:271.70px;top:406px;letter-spacing:-0.778px">Cash Sales</span>
<span class="t tx" style="left:271.70px;top:431px;letter-spacing:-0.153px">Extra Delivery Order</span>
<span class="t tx" style="left:305.30px;top:463px;letter-spacing:0.01px">Count = 282</span>
<span class="t tx" style="left:274.50px;top:498px;letter-spacing:-0.2px">Grant</span>
<span class="t tx" style="left:388.60px;top:498px;letter-spacing:-0.42px">Revoke</span>
<span class="t tx" style="left:503.30px;top:498px;letter-spacing:0.275px">Grant All</span>
<span class="t tx" style="left:617.90px;top:498px;letter-spacing:-0.089px">Revoke All</span>
</div>
</body></html>
